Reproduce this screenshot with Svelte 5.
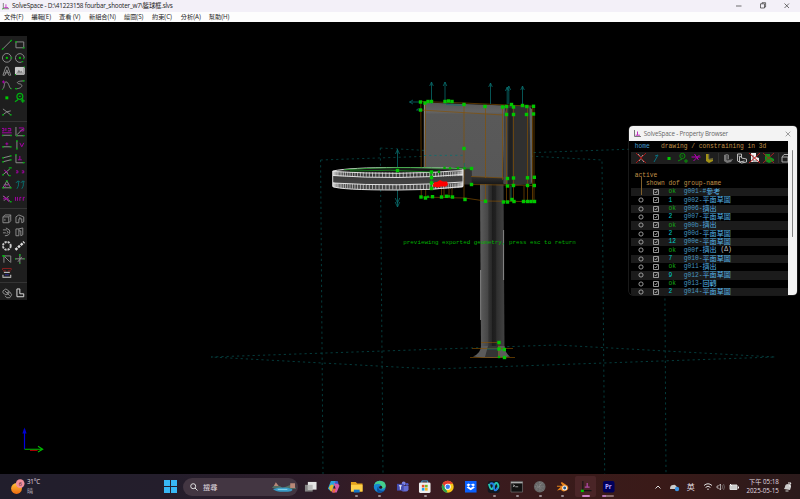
<script>
  const menus = [
    ['文件(F)', 27.5], ['編輯(E)', 27.5], ['查看 (V)', 30], ['新組合(N)', 35],
    ['繪圖(S)', 28], ['約束(C)', 28.8], ['分析(A)', 28], ['幫助(H)', 28]
  ];

  // Toolbar glyphs, drawn on a 12x12 grid: g = grey, n = green, m = magenta, c = teal, w = white
  const tools = [
    [
      [['g', 'M2 10L10 2'], ['n', 'M1 11l1.500-1.500M9.500 2.500l1.500-1.500']],
      [['g', 'M2 3H10V9H2Z'], ['n', 'M1 3h2M9 9h2']],
      [['g', 'M10.5 6a4.5 4.5 0 1 1-9 0a4.5 4.5 0 1 1 9 0'], ['N', 'M5 5h2v2H5z'], ['n', 'M10 6h1.500']],
      [['g', 'M8 10.2A4.5 4.5 0 1 1 10.5 6'], ['N', 'M5 5h2v2H5z'], ['n', 'M10 6v1.500M8 10h1.500']],
      [['g', 'M2 10.5L5 2H7L10 10.5H8L6 5L4 10.5ZM3.5 8H8.5']],
      [['w', 'M1.5 2.5H10.5V9.5H1.5Z'], ['f', 'M2 3H10V9H2Z'], ['k', 'M3 8l2-3l1.500 2l1-1l1.500 2z'], ['n', 'M1 10h1M10 2h1']],
      [['g', 'M2 10C4 8 3 3 5 3C8 3 8 8 10 10'], ['m', 'M1 3h3M2.500 1.500v3'], ['n', 'M1 11h1M10 10h1']],
      [['g', 'M10 2C1 2 3 5 6 5C10 6 8 10 2 10'], ['n', 'M1 10h2M9 2h2']],
      [['N', 'M4.5 4.500H7.5V7.500H4.5Z']],
      [['n', 'M9 4.500a3 3 0 1 1-6 0a3 3 0 1 1 6 0M5 4.500h2M1 10L4 8M7 9h4M9 7v4']],
      [['g', 'M2 3L10 9M2 9L6 6L10 5'], ['n', 'M1 9h2M9 9h2']],
      []
    ],
    [
      [['m', 'M1 2.500h2v2.500H1M5 2v3M7 2.500h3v2.500H7M1 7H11'], ['g', 'M1 9.5H11'], ['n', 'M1 10h1.500M9.500 10h1.500']],
      [['g', 'M2 1V10H10M3 9L9 3'], ['m', 'M5 2h5v3H6'], ['n', 'M2 10h1.500M9 10h2']],
      [['g', 'M2 8H10'], ['m', 'M6 3.500v3M4.500 5h3'], ['n', 'M1 8h2M9 8h2']],
      [['g', 'M3 2V10'], ['m', 'M6 4l2 4l2-4'], ['n', 'M3 1v2M3 9v2']],
      [['g', 'M2 5L10 3M2 9L10 7'], ['n', 'M1 5h2M1 9h2M9 3h2M9 7h2']],
      [['g', 'M2 2V10H10'], ['m', 'M6 3V7M4 7h4'], ['n', 'M1 2h2M9 10h2']],
      [['g', 'M2 9L9 3M5 5L8 10'], ['m', 'M3 4l4 3'], ['n', 'M1 9h2M8 2h3M8 10h2']],
      [['m', 'M2 5h2v2h-2M8 5h2v2h-2']],
      [['g', 'M6 2L2 9H10ZM4 6h4'], ['m', 'M3 6l2 2M7 5l2 2'], ['n', 'M1 9h2M9 9h2M5 2h2']],
      [['c', 'M3 10C5 7 5 5 4 2M2 4l2-2l2 1M8 10C10 7 10 5 9 2M7 4l2-2l2 1']],
      [['g', 'M2 3L10 9M3 8L8 3'], ['m', 'M3 3l5 6M2 6h6'], ['n', 'M9 9h2']],
      [['m', 'M1.500 4v4M3.500 4v4M6 8V4.500h1.500M9.500 8V4.500h1.500']]
    ],
    [
      [['g', 'M2 4H8V10H2ZM2 4L4 2H10L8 4M10 2V8L8 10M4 6v2']],
      [['g', 'M2 4L5 2L10 4V9L8 10V6H5V10H2ZM6 4V6']],
      [['g', 'M2 4H6M2 7H5M5 2Q10 4 9 6Q9 10 4 10M6 5q3 1 0 3']],
      [['g', 'M2 3H5V10H2ZM5 3L9 2V9L7 10V5H5']],
      [['d', 'M10 6a4 4 0 1 1-8 0a4 4 0 1 1 8 0']],
      [['e', 'M1.5 10L10.5 2']],
      [['g', 'M2 3H10V10M3 10V3M3 3L9 9'], ['n', 'M1 3h3M3 2v2']],
      [['g', 'M1 6H11M6 1V11M4 9L8 4'], ['n', 'M6 1v2M1 6h1M10 6h1M6 10v1']],
      [['r', 'M1.5 3V1.5H10.5V3M2 4h3M7 4h3'], ['w', 'M3 5.5H9M1.5 10.5H10.5M2 10V8M10 10V8'], ['b', 'M4 8h4']],
      []
    ],
    [
      [['g', 'M2 4L5 2L8 4V7L5 8L2 6ZM5 6L9 5L11 8L9 11H6L4 9M4 4L9 9']],
      [['w', 'M3 2V10H10V7H6V2Z']]
    ]
  ];

  const groups = [
    ['ok', 'g001-#', '參考', ''], ['1', 'g002-', '平面草圖', ''], ['ok', 'g006-', '擠出', ''],
    ['2', 'g007-', '平面草圖', ''], ['ok', 'g00b-', '擠出', ''], ['2', 'g00d-', '平面草圖', ''],
    ['12', 'g00e-', '平面草圖', ''], ['ok', 'g00f-', '擠出', ' (Δ)'], ['7', 'g010-', '平面草圖', ''],
    ['ok', 'g011-', '擠出', ''], ['9', 'g012-', '平面草圖', ''], ['ok', 'g013-', '回轉', ''],
    ['2', 'g014-', '平面草圖', '']
  ];

  const points = [
    [420.5, 102], [420.5, 110], [425, 103], [428, 101.5], [431.5, 101.5], [445, 101.5], [448.5, 101], [452, 101.5],
    [464, 104.5], [485, 106.5], [502.5, 107], [511.5, 104.5], [506.5, 106.5], [513.5, 107], [506.5, 114.5], [513.5, 114.5],
    [522.5, 105.5], [526.8, 106.5], [533.5, 106.3], [526.5, 114.5], [533.5, 114], [464, 148.5],
    [471.5, 168.5], [471.5, 184.5], [507.5, 178.5], [513.5, 178], [527.5, 177.8], [534.3, 177.3], [507.5, 186],
    [513.5, 185.5], [527.5, 185.5], [534.3, 185.5], [421, 197], [425.5, 198], [432.5, 196.7], [441.5, 197],
    [446.5, 196.3], [452.5, 197], [465, 199.5], [485.5, 201.3], [503.5, 202], [507.5, 202], [512, 199.5],
    [514, 201.5], [523.5, 201.5], [527.5, 201.5], [531, 201.5], [534.5, 201.5], [397.5, 170.5], [431.5, 172],
    [431.5, 177.5], [431.5, 183], [431.5, 188.5], [499, 342.5], [499, 349], [504.3, 349.5], [504.5, 357.5]
  ];
  const smallPoints = [[444.5, 167.8], [450, 168.3], [458, 168], [464.5, 168.3], [428, 196.8], [449, 196.3], [439, 171.8], [499, 357]];
  const arrows = [[431.5, 82], [445, 82], [490.5, 83], [507.2, 87], [508.8, 86], [522.5, 86]];

  const ticks = Array.from({ length: 58 }, (_, i) => {
    const a = ((i + 0.5) / 58) * Math.PI;
    return { x: 398 - 64.5 * Math.cos(a), s: Math.sin(a) };
  });
</script>

<div class="screen">
  <header class="title">
    <svg class="logo" viewBox="0 0 8 8"><path d="M1.5 0V6.5H8" fill="none" stroke="#777" /><path d="M4.5 1.5V5M2.5 5.2H7" stroke="#c030c0" /><path d="M0 7l2-1" stroke="#3a3" /></svg>
    <span>SolveSpace - D:\41223158 fourbar_shooter_w7\籃球框.slvs</span>
    <svg class="winbtns" viewBox="0 0 70 12"><path d="M6 6H11.5M30.500 3.8H34.5V8H30.5ZM32 3.8V2.7H35.6V7H34.5M54.5 3.5l4.5 4.5M59 3.5l-4.5 4.5" /></svg>
  </header>
  <nav>
    {#each menus as [label, w]}<span style="width:{w}px">{label}</span>{/each}
  </nav>

  <main>
    <svg class="scene" viewBox="0 22 800 452">
      <defs>
        <linearGradient id="front" x2="0" y2="1"><stop offset="0" stop-color="#585858" /><stop offset=".12" stop-color="#646464" /><stop offset=".15" stop-color="#595959" /><stop offset="1" stop-color="#575757" /></linearGradient>
        <linearGradient id="post"><stop offset="0" stop-color="#5c5c5c" /><stop offset=".32" stop-color="#464646" /><stop offset=".36" stop-color="#343434" /><stop offset=".48" stop-color="#292929" /><stop offset=".5" stop-color="#1c1c1c" /><stop offset=".65" stop-color="#222" /><stop offset=".68" stop-color="#2f2f2f" /><stop offset="1" stop-color="#424242" /></linearGradient>
        <linearGradient id="ring" x2="0" y2="1"><stop offset="0" stop-color="#333" /><stop offset="1" stop-color="#484848" /></linearGradient>
        <linearGradient id="under" x2="0" y2="1"><stop offset="0" stop-color="#4c4c4c" /><stop offset="1" stop-color="#171717" /></linearGradient>
      </defs>

      <g class="plane">
        <path d="M320.6 160L664 148L666 474M320.6 160L323 474M380.3 148L602 160L604.7 474M380.3 148L383 474" />
        <path d="M211 357L556 345L775 357L433 369Z" />
      </g>

      <path d="M480 184H503.5L504.5 350H481Z" fill="url(#post)" />
      <path d="M481 346H504.5Q505 353 510 356.5Q492 359.5 473 356.5Q481 353 481 346Z" fill="#5b5b5b" />
      <path d="M488 346H498V357H485Z" fill="#343434" />
      <path d="M480.6 270V320M503.6 230V280" stroke="#aaa" stroke-width=".7" />

      <path d="M424 102.5L505 105.5L503.5 181L465 178L425 170Z" fill="url(#front)" />
      <path d="M464 168.5L471.7 169V176.500L504 178L506 184.5L465 184Z" fill="url(#under)" />
      <path d="M464 168.5L471.7 169V184.5H463Z" fill="#333" />
      <path d="M505 105.5L531 105.5L532 184L514 185.5L503 183Z" fill="#303030" />
      <path d="M504.5 113L507.5 107V184H503.5Z" fill="#484848" />
      <path d="M508.5 108H512.5V184H508Z" fill="#202020" />
      <path d="M529.5 107L532 109V182L530.8 184Z" fill="#606060" />
      <path d="M424.3 104V169" stroke="#aaa" stroke-width=".7" />

      <g class="edge">
        <path d="M420.5 101.5L464 103L534 106.3V201.3M420.5 110L503 115M420.8 101.5L421.3 197M425.5 103V169M464 104V199M485.5 106V178M485.5 184V201M502.5 107V180M506.5 107V201M513.5 105V201M527.5 106V201M532.5 106V201" />
        <path d="M421 197L465 198L485 201L535 201.7M471 176.5L504 178M471.5 184.5L534 185.5M425.7 190V198M441.5 188V197M444 188V197M449 188V197M452 188V197M510 186V201M524 186V201" />
        <path d="M481 342.5H499V357M472 348.5H513M470 357.5H515" />
      </g>

      <g class="normal">
        {#each arrows as [x, y]}<path d="M{x} 104V{y}M{x - 1.8} {y + 4}L{x} {y}L{x + 1.8} {y + 4}" />{/each}
        <path d="M420 102H409.5M413 100L409.5 102L413 104M420 110H416.5M418.5 108.5L416.5 110M397.5 168V149M395.5 154L397.5 149.5L399.5 154M397.5 190V207M395.2 202L397.5 207L399.8 202M395.2 198L397.5 203L399.8 198M446 104.5L465 105.5M511 186V201M487 349H499M464.3 163V168" />
        <path d="M424 155.500L463 155.300" stroke-dasharray="2.200 3" />
      </g>

      <path d="M332.7 171Q350 167.5 398 167.5H463V187Q440 190 398 190Q340 190 332.7 186.5Z" fill="url(#ring)" />
      <path d="M340 171.5Q397 164 455 171.5Q397 174.5 340 171.5Z" fill="#171717" />
      <g class="rim">
        {#each ticks as t}
          <path d="M{t.x} {171 + t.s * 1.5}V{175.5 + t.s * 1.5}M{t.x} {182.5 + t.s * 2}V{187 + t.s * 2.5}" />
        {/each}
        <path class="bold" d="M332.7 171Q350 167.5 398 167.5Q450 167.5 463 169V186.5Q430 190.5 398 190Q340 190 332.7 186.5ZM333 171.5Q398 175.5 463 170.5M333 175.5Q398 180 463 174.5M333 183Q398 187 463 182" />
      </g>
      <path d="M344 169.8Q397 166 450 168.5L463 168.2H471M350 171Q390 169 431 172" class="sketch" />
      <path d="M431.5 172V189" class="sketch" />
      <path d="M433 184l2-2h2l3-2l3 1.5h4l1 3l-2 2h-5l-3 1l-5-1z" fill="#f00" />

      {#each points as [x, y]}<rect x={x - 1.7} y={y - 1.7} width="3.4" height="3.4" fill="#00c800" />{/each}
      {#each smallPoints as [x, y]}<rect x={x - 1.2} y={y - 1.2} width="2.4" height="2.4" fill="#00b000" />{/each}

      <text x="403.3" y="244.3" textLength="172.5" lengthAdjust="spacingAndGlyphs">previewing exported geometry, press esc to return</text>

      <g fill="none">
        <path d="M24.5 449V429" stroke="#0000e0" stroke-width="1.2" /><path d="M24.5 427.5L22.4 433.5H26.6Z" fill="#0000d0" />
        <path d="M30 450.3H37.5" stroke="#d00000" /><path d="M24.5 449.2H42M38 446.3L42.7 449.2L38 452" stroke="#00b800" stroke-width="1.1" />
      </g>
    </svg>

    <aside class="toolbar">
      {#each tools as section}
        <div class="section">
          {#each section as icon}
            <svg viewBox="0 0 12 12">{#each icon as [kind, d]}<path class={kind} {d} />{/each}</svg>
          {/each}
        </div>
      {/each}
    </aside>

    <section class="browser">
      <div class="bar">
        <svg class="logo" viewBox="0 0 8 8"><path d="M1.5 0V6.5H8" fill="none" stroke="#777" /><path d="M4.5 1.5V5M2.5 5.2H7" stroke="#c030c0" /></svg>
        <span>SolveSpace - Property Browser</span>
        <svg class="x" viewBox="0 0 6 6"><path d="M.7 .7l4.6 4.6M5.3 .7L.7 5.3" stroke="#777" stroke-width=".7" /></svg>
      </div>
      <div class="body">
        <div class="text">
          <p class="crumb"><b>home</b><span>drawing / constraining in 3d</span></p>
          <svg class="strip" viewBox="0 0 158 12" fill="none">
            <path d="M7 2L13 10M12 3L8 9" stroke="#aaa" /><path d="M5 1L15 11M15 1L5 11" stroke="#a31818" />
            <path d="M23 10L27 3M24 4l3-1" stroke="#087080" />
            <path d="M36.500 5h3v3h-3z" fill="#00c800" />
            <path d="M54 4a2.6 2.6 0 1 1-5.2 0a2.6 2.6 0 1 1 5.2 0M50.5 4h1.5M47 9L51 7M53 9h4M55 7v4" stroke="#079207" />
            <path d="M60.500 5H69.500M63.500 2L67.500 8M62.500 9L68.500 3" stroke="#b800b8" />
            <path d="M75 2h3v5l4-1v3l-4 2l-3-2z" fill="#a29216" /><path d="M78 2v5h4" stroke="#444" />
            <path d="M87.5 1V11M147.500 1V11" stroke="#303030" />
            <path d="M93 3l3-1l2 1v4h4l-2 3l-4 1l-3-2z" fill="#777" /><path d="M96 3v5l5-1" stroke="#333" />
            <path d="M106.500 2h4v4l5 1v3l-5 1l-4-2zM107.500 4l3 1M108.500 5v5l5-1" stroke="#bbb" />
            <path d="M120 1h5v4l3 1v4h-8z" fill="#eee" /><path d="M122 3v6h4" stroke="#777" /><path d="M118 1l11 10M129 1L118 11" stroke="#c21818" />
            <path d="M134 2h5v3l4 2v2l-5 2l-4-2z" fill="#12921b" /><path d="M132 1L143 11M143 1L132 11" stroke="#a32222" />
            <path d="M151 5h6v5h-6zM151 5l2-2.500h5" stroke="#aaa" />
          </svg>
          <p class="active">active</p>
          <p class="heads"><span>shown</span><span>dof</span><span>group-name</span></p>
          <div class="rows">
            {#each groups as [dof, id, name, extra], i}
              <div class="row">
                <i>{#if i}<svg viewBox="0 0 6 6"><circle cx="3" cy="3" r="2.1" /></svg>{/if}</i>
                <svg viewBox="0 0 6 6"><path d="M.5 .5H5.500V5.500H.5ZM1.500 2.800L2.700 4L4.500 1.500" /></svg>
                <span class="dof" class:ok={dof === 'ok'}>{dof}</span>
                <span class="id">{id}</span><span class="cjk">{name}</span><span class="extra">{extra}</span>
              </div>
            {/each}
          </div>
          <div class="tree"></div>
        </div>
        <div class="scroll"><div></div></div>
      </div>
    </section>
  </main>

  <footer>
    <svg class="sun" viewBox="0 0 14 16"><defs><linearGradient id="sun" x2="0" y2="1"><stop stop-color="#ffc13a" /><stop offset="1" stop-color="#ef6b10" /></linearGradient></defs><circle cx="5.500" cy="9.500" r="5.400" fill="url(#sun)" /><circle cx="9.200" cy="4.600" r="4.300" fill="#f18f9b" /><text x="7.700" y="6.700" font-size="5.500" fill="#401018">6</text></svg>
    <div class="weather"><span>31°C</span><span>晴</span></div>
    <svg class="start" viewBox="0 0 13 13" fill="#38b8f5"><path d="M0 0h6v6H0zM7 0h6v6H7zM0 7h6v6H0zM7 7h6v6H7z" /></svg>
    <div class="search">
      <svg class="lens" viewBox="0 0 8 8"><circle cx="3.200" cy="3.200" r="2.500" fill="none" stroke="#ddd" /><path d="M5 5L7.500 7.500" stroke="#ddd" /></svg>
      <span>搜尋</span>
      <svg class="island" viewBox="0 0 26 13"><path d="M1 8Q3 4 6 6Q9 5 12 8L20 5L24 4L26 9Z" fill="#547064" /><path d="M2 9Q13 6 22 9Q24 12 13 12Q5 12 2 9Z" fill="#389bc6" /><path d="M5 2l3 4H3zM20 3h5v5h-5z" fill="#b98878" /><path d="M7 9h10v1H7z" fill="#8fd8eb" /></svg>
    </div>
    <div class="apps">
      <div class="app"><svg viewBox="0 0 14 14"><path d="M1 5h8v7H1z" fill="#858585" /><path d="M4 2h9v8H4z" fill="#e5e5e5" /><path d="M4 5h5v5H4z" fill="#bbb" /></svg></div>
      <div class="app"><svg viewBox="0 0 14 14"><path d="M4 1h5l2 5H7l-1 5H3L1 9z" fill="#2aa5dc" /><path d="M7 3h4l2 3-3 7H5l1-4h3z" fill="#d659a4" /><path d="M2 8l2-3h3l-2 7H4z" fill="#e8ba29" /><path d="M9 1h2l1 3H8z" fill="#365cd0" /><path d="M6 9h3l-1 4H6z" fill="#ee6a3a" /></svg></div>
      <div class="app run"><svg viewBox="0 0 14 14"><path d="M1 2h5l1.500 1.500H13V12H1z" fill="#e2a21c" /><path d="M1 5h12v7H1z" fill="#fdd04a" /><path d="M4 10h6v3H4z" fill="#1678c8" /></svg></div>
      <div class="app run"><svg viewBox="0 0 14 14"><circle cx="7" cy="7" r="6.200" fill="#1687d0" /><path d="M1 6Q2 1 7 .8Q13 1 13.200 6Q13 9 9 9Q8 8 9 7Q8 4 5 4Q2 4 1 6" fill="#45cf8c" /><path d="M6 6Q4 12 12 11Q9 14 5 13Q3 9 6 6" fill="#0b4f9e" /><circle cx="8" cy="7.500" r="1.600" fill="#27131d" /></svg></div>
      <div class="app"><svg viewBox="0 0 14 14"><circle cx="8" cy="3.500" r="2" fill="#7b83e5" /><circle cx="11.500" cy="4.500" r="1.500" fill="#5059c9" /><path d="M5 6h8v4q-1 2-3 2H7q-2-1-2-3z" fill="#656dd3" /><path d="M1 4h7v7H1z" fill="#444cb0" /><path d="M3 6h3M4.500 6v4" stroke="#fff" /></svg></div>
      <div class="app run"><svg viewBox="0 0 14 14"><path d="M4 3V1h6v2" fill="none" stroke="#43a6db" /><rect x="1" y="2.500" width="12" height="11" rx="1.500" fill="#eee" /><path d="M4 5h2.700v2.700H4z" fill="#e84e28" /><path d="M7.300 5H10v2.700H7.300z" fill="#79b51d" /><path d="M4 8.300h2.700V11H4z" fill="#20a2e8" /><path d="M7.300 8.300H10V11H7.300z" fill="#f4b51c" /></svg></div>
      <div class="app"><svg viewBox="0 0 14 14"><circle cx="7" cy="7" r="6.200" fill="#f8c617" /><path d="M1.600 4A6.200 6.200 0 0 1 12.400 4H7L4 8Z" fill="#e53b2e" /><path d="M1.600 4L5 9L7 13.200A6.200 6.200 0 0 1 1.600 4" fill="#2ba24c" /><circle cx="7" cy="7" r="3.200" fill="#fff" /><circle cx="7" cy="7" r="2.300" fill="#3b7ced" /></svg></div>
      <div class="app"><svg viewBox="0 0 14 14"><path d="M1 1h12v12H1z" fill="#0a61fe" /><path d="M4.500 3.500L7 5L4.500 6.600L2.500 5.200ZM9.500 3.500L11.500 5.200L9.500 6.600L7 5ZM4.500 6.600L7 8.200L9.500 6.600L11.300 7.800L7 10.500L2.700 7.800Z" fill="#fff" /></svg></div>
      <div class="app run"><svg viewBox="0 0 14 14"><rect x=".8" y="1" width="12.400" height="12.400" rx="2.500" fill="#111820" /><path d="M2 4Q4 13 7 7Q9 1 11 4Q13 7 10 10" fill="none" stroke="#25c4b0" stroke-width="2" /><path d="M3 4Q7 2 7 7Q8 14 11 8" fill="none" stroke="#237de7" stroke-width="2" /></svg></div>
      <div class="app run"><svg viewBox="0 0 14 14"><path d="M1 1.500h12v11H1z" fill="#111" stroke="#777" stroke-width=".7" /><path d="M1 2h12v1.500H1z" fill="#aaa" /><path d="M3 5l2 1l-2 1M5.500 7h3" stroke="#ddd" stroke-width=".7" fill="none" /></svg></div>
      <div class="app run"><svg viewBox="0 0 14 14"><circle cx="7" cy="7" r="6" fill="#686868" /><path d="M3 4l8 7M4 10l6-8M2 7h10M7 2v10M3 9l7-6" stroke="#999" stroke-width=".6" stroke-dasharray="1 1" /></svg></div>
      <div class="app run"><svg viewBox="0 0 14 14"><path d="M6 2L12 6Q14 9 11 11Q7 13 5 10L1 11L5 7H1V6H7L5 3Z" fill="#e8841a" /><circle cx="9" cy="8.300" r="2.600" fill="#eee" /><circle cx="9" cy="8.300" r="1.500" fill="#265787" /></svg></div>
      <div class="app run current"><svg viewBox="0 0 14 14"><path d="M4 1V11H13" fill="none" stroke="#151515" stroke-width="1.200" /><path d="M8.500 3v4.500M6 7.500h5" stroke="#b04aa8" stroke-width="1.300" /><path d="M2 10h3v2.500H2z" fill="#00c800" /></svg></div>
      <div class="app run wide"><svg viewBox="0 0 14 14"><rect x="1" y="1" width="12" height="12" rx="2" fill="#00005b" /><text x="3" y="9.300" font-size="6.500" font-weight="700" fill="#b6a8ff">Pr</text></svg></div>
    </div>
    <svg class="tray" viewBox="0 0 30 14" fill="none"><path d="M3.500 8.500L6 6L8.500 8.500" stroke="#ddd" /><path d="M18 9h7q1-2-1-3q-1-2-3-1q-3 0-3 4" fill="#ccc" /><circle cx="25" cy="9" r="2.200" fill="#3b91df" /></svg>
    <span class="ime">英</span>
    <svg class="tray2" viewBox="0 0 38 14" fill="none" stroke="#ddd"><path d="M1 5.500Q5 2 9 5.500M2.600 7.400Q5 5 7.400 7.400M4.200 9.200H5.800" /><path d="M14 6h1.500l2-2v6l-2-2H14z" stroke-width=".7" /><path d="M19 5q1.500 2 0 4M20.500 4q2 3 0 6" stroke="#888" stroke-width=".6" /><path d="M27 5h7v4.500h-7z" fill="#ccc" /><path d="M35.500 6.500v2M27 4l2 2" stroke="#fff" /></svg>
    <div class="clock"><span>下午 05:18</span><span>2025-05-15</span></div>
    <svg class="bell" viewBox="0 0 9 10"><path d="M1 7L2 5Q2 2 5 2Q8 2 8 5L7 8Z" fill="#ccc" /><path d="M2.500 9h3" stroke="#ccc" /><path d="M5 1h3l-2 3h2" fill="none" stroke="#eee" /></svg>
  </footer>
</div>

<style>
  :global(body) { margin: 0; background: #000; overflow: hidden; }
  .screen { width: 800px; height: 499px; display: flex; flex-direction: column; background: #000; font-family: "Open Sans", "Noto Sans CJK TC", sans-serif; }
  svg { display: block; flex: none; }
  p { margin: 0; }
  .title { height: 12px; flex: none; display: flex; align-items: center; background: #f3f0f8; color: #222; font-size: 6.35px; letter-spacing: -.2px; line-height: 12px; white-space: nowrap; }
  .title .logo { width: 7px; height: 7px; margin: 0 3px 0 2px; }
  .winbtns { width: 70px; height: 12px; margin-left: auto; }
  .winbtns path { fill: none; stroke: #333; stroke-width: .7; }
  nav { height: 10px; flex: none; display: flex; padding-left: 4px; background: #fdfdfd; color: #222; font-size: 6.200px; line-height: 10px; white-space: nowrap; }
  nav span { display: block; flex: none; }
  main { position: relative; height: 452px; flex: none; display: flex; }
  .scene { position: absolute; inset: 0; width: 800px; height: 452px; }
  .plane path { fill: none; stroke: #075454; stroke-width: .7; stroke-dasharray: 2.2 3; }
  .edge path { fill: none; stroke: #875000; stroke-width: .65; }
  .normal path { fill: none; stroke: #087070; stroke-width: .75; }
  .rim path { fill: none; stroke: #ddd; stroke-width: .7; }
  .rim .bold { stroke: #e8e8e8; stroke-width: .95; }
  .sketch { fill: none; stroke: #13941a; stroke-width: .8; }
  .scene text { font: 6px "Liberation Mono", monospace; fill: #00b000; }

  .toolbar { position: relative; box-sizing: border-box; margin-top: 14px; width: 27.300px; height: 264px; background: #1e1e1e; padding-top: 1.800px; }
  .section { box-sizing: border-box; display: flex; flex-wrap: wrap; padding-bottom: 2.800px; margin: 0 .3px 3.200px .3px; border-bottom: 1px solid #343434; }
  .section:last-child { border: 0; }
  .section svg { width: 11.700px; height: 11.700px; margin: .85px .8px; }
  .toolbar path { fill: none; stroke-width: 1; }
  .toolbar .g { stroke: #8b8b8b; }
  .toolbar .w { stroke: #ddd; }
  .toolbar .f { fill: #c8c8c8; }
  .toolbar .k { fill: #777; }
  .toolbar .n { stroke: #00b010; stroke-width: 1.300; }
  .toolbar .N { fill: #00cc00; }
  .toolbar .m { stroke: #a800a8; }
  .toolbar .c { stroke: #087070; }
  .toolbar .r { stroke: #8b2020; }
  .toolbar .b { stroke: #3030a0; }
  .toolbar .d { stroke: #ccc; stroke-width: 2; stroke-dasharray: 2.200 1; }
  .toolbar .e { stroke: #ddd; stroke-width: 2.500; stroke-dasharray: 2.600 1; }

  .browser { position: relative; margin: 104px 0 0 601.500px; width: 168px; height: 169px; border-radius: 4px; overflow: hidden; background: #000; flex: none; box-shadow: 0 0 0 .5px #333; }
  .bar { height: 15px; background: #f3f3f3; display: flex; align-items: center; font-size: 6.250px; letter-spacing: -.17px; line-height: 15px; color: #666; }
  .bar .logo { width: 8px; height: 8px; margin: 0 3px 0 4px; }
  .bar .x { width: 6px; height: 6px; margin: 0 6px 0 auto; }
  .body { display: flex; height: 154px; }
  .text { position: relative; width: 159.500px; box-sizing: border-box; padding-left: 2px; font: 6.280px "Liberation Mono", "Noto Sans CJK TC", monospace; color: #c09248; overflow: hidden; }
  .scroll { width: 8.500px; background: #f3f3f3; }
  .scroll div { width: 1.500px; height: 87px; margin: 9px 0 0 3.300px; background: #858585; border-radius: 1px; }
  .crumb { height: 11px; line-height: 12px; padding-left: 4px; white-space: pre; }
  .crumb b { font-weight: 400; color: #459bcc; display: inline-block; width: 26.300px; }
  .strip { width: 158px; height: 12px; background: #1e1e1e; }
  .active { height: 9px; padding: 7px 0 0 4px; line-height: 9px; }
  .heads { height: 8px; line-height: 8px; display: flex; padding-left: 15.200px; }
  .heads span { margin-right: 3.800px; }
  .row { height: 8.330px; line-height: 8.330px; display: flex; align-items: center; white-space: pre; color: #4797c0; }
  .row:nth-child(odd) { background: #1b1b1b; }
  .row svg { width: 6px; height: 6px; fill: none; stroke: #bbb; stroke-width: .8; }
  .row i { width: 6px; margin: 0 9px 0 7px; }
  .dof, .id { padding-top: .6px; }
  .dof { width: 15.200px; margin-left: 9.700px; color: #00c8c8; }
  .dof.ok { color: #14a814; }
  .cjk { font: 7.100px "Noto Sans CJK TC", sans-serif; line-height: 6px; height: 8px; color: #55b2e5; }
  .extra { color: #ccc; font-size: 6.280px; line-height: 8px; }
  .tree { position: absolute; left: 12px; top: 36px; width: .8px; height: 18px; background: #80602b; }

  footer { height: 25px; flex: none; display: flex; align-items: center; background: linear-gradient(90deg, #211e2c 0, #241e2c 20%, #2c1c29 38%, #3a1b22 50%, #391b1b 70%, #3a1a18 82%, #2b1a1b 100%); color: #e2dfe2; white-space: nowrap; overflow: hidden; }
  .sun { width: 14px; height: 16px; margin-left: 11px; }
  .weather { width: 136.500px; margin-left: 2px; display: flex; flex-direction: column; font-size: 6.200px; letter-spacing: -.2px; line-height: 8.500px; }
  .weather span:last-child { color: #aaa6b0; }
  .start { width: 13px; height: 13px; }
  .search { width: 115px; height: 18px; box-sizing: border-box; margin-left: 6.500px; border-radius: 9px; background: #433642; display: flex; align-items: center; padding: 0 2px 0 7px; font-size: 7.200px; }
  .lens { width: 8px; height: 8px; margin-right: 5px; }
  .island { width: 25px; height: 13px; margin-left: auto; }
  .apps { display: flex; margin-left: 1px; }
  .app { position: relative; width: 22.960px; height: 25px; display: flex; align-items: center; justify-content: center; flex: none; }
  .app svg { width: 13.500px; height: 13.500px; position: relative; }
  .run::after { content: ""; position: absolute; left: 10px; bottom: 2.300px; width: 3px; height: 1.400px; border-radius: 1px; background: #9a8c90; }
  .current::before { content: ""; position: absolute; left: 1px; top: 2px; width: 20.500px; height: 21px; border-radius: 2px; background: #4a2527; }
  .current::after { left: 8px; width: 8px; background: #cc82c4; }
  .wide::after { left: 5px; width: 12px; background: linear-gradient(90deg, #b776b2 35%, #876a6c 35%); }
  .tray { width: 30px; height: 14px; margin-left: 32px; }
  .ime { font-size: 8px; width: 16px; margin-left: 4.500px; }
  .tray2 { width: 38px; height: 14px; }
  .clock { width: 37px; display: flex; flex-direction: column; align-items: flex-end; font-size: 6.200px; line-height: 8.500px; margin-left: 1px; }
  .bell { width: 9px; height: 10px; margin-left: 4px; }
</style>
